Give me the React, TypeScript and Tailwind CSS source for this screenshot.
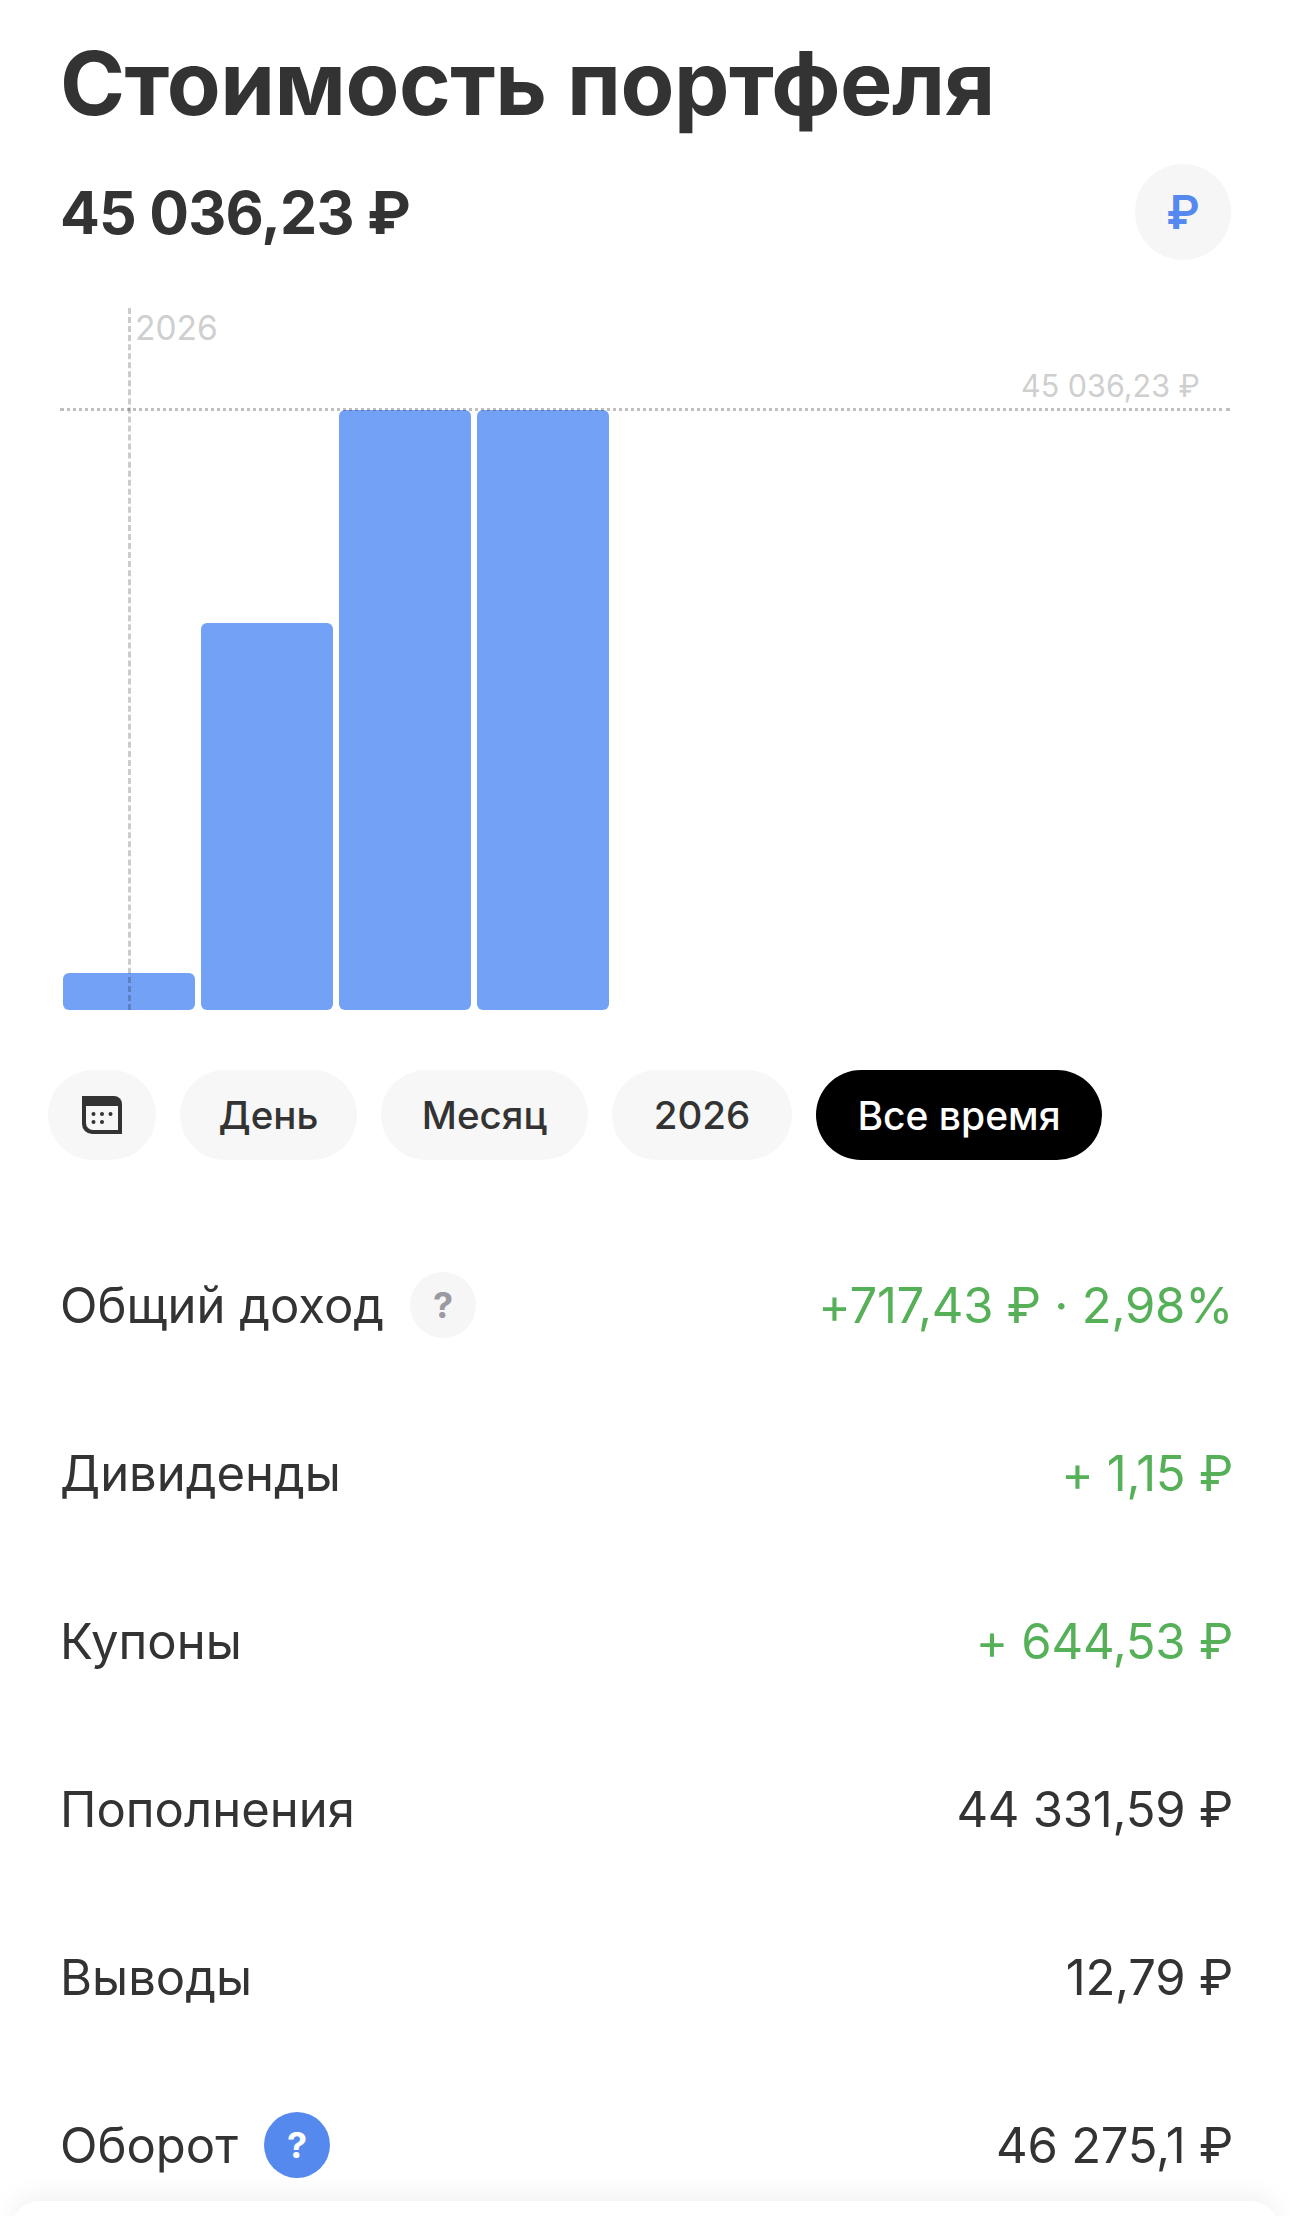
import React from 'react';

const FONT = "font-['Inter','Noto_Sans',sans-serif]";

const bars = [
  { id: 'a', height: 'h-[37px]' },
  { id: 'b', height: 'h-[387px]' },
  { id: 'c', height: 'h-[600px]' },
  { id: 'd', height: 'h-[600px]' },
];

const periods = [
  { label: 'День', width: 'w-[177px]' },
  { label: 'Месяц', width: 'w-[207px]' },
  { label: '2026', width: 'w-[180px]' },
];

const rows = [
  { label: 'Общий доход', value: '+717,43 ₽ · 2,98%', green: true, hint: 'gray' },
  { label: 'Дивиденды', value: '+ 1,15 ₽', green: true },
  { label: 'Купоны', value: '+ 644,53 ₽', green: true },
  { label: 'Пополнения', value: '44 331,59 ₽' },
  { label: 'Выводы', value: '12,79 ₽' },
  { label: 'Оборот', value: '46 275,1 ₽', hint: 'blue' },
];

const CalendarIcon = () => (
  <svg width="40" height="38" viewBox="0 0 40 38" fill="none">
    <path d="M0 0H32a8 8 0 0 1 8 8V38H10a10 10 0 0 1-10-10Z" fill="#333333" />
    <path d="M4 10H36V34H11a7 7 0 0 1-7-7Z" fill="#f7f7f7" />
    <circle cx="11.5" cy="18" r="2" fill="#333333" />
    <circle cx="20" cy="18" r="2" fill="#333333" />
    <circle cx="28.5" cy="18" r="2" fill="#333333" />
    <circle cx="11.5" cy="26" r="2" fill="#333333" />
    <circle cx="20" cy="26" r="2" fill="#333333" />
  </svg>
);

const App = () => {
  return (
    <div className={`relative h-[2216px] w-[1290px] overflow-hidden bg-white text-[#333333] ${FONT}`}>
      <div className="pt-[30px] pr-[59px] pl-[60px]">
        <h1 className="text-[88px] leading-[106px] font-bold tracking-[-0.5px]">Стоимость портфеля</h1>
        <div className="mt-[28px] flex h-[96px] items-center justify-between">
          <div className="text-[59px] leading-none font-bold tracking-[-0.8px]">45 036,23 ₽</div>
          <div className="flex h-[96px] w-[96px] items-center justify-center rounded-full bg-[#f6f6f6] text-[46px] font-semibold text-[#5589ee]">
            ₽
          </div>
        </div>
      </div>

      {/* Chart */}
      <div className="relative mx-[60px] mt-[48px] h-[702px] w-[1170px]">
        <div className="absolute inset-x-0 bottom-0 flex items-end gap-[6px] pl-[3px]">
          {bars.map((bar) => (
            <div key={bar.id} className={`w-[132px] rounded-[6px] bg-[#73a1f6] ${bar.height}`} />
          ))}
        </div>
        <div className="absolute top-0 bottom-0 left-[68px] border-l-[3px] border-dashed border-black/20" />
        <div className="absolute inset-x-0 top-[100px] border-t-[3px] border-dotted border-black/25" />
        <div className="absolute top-[0px] left-[75px] text-[33.5px] leading-[40px] text-[#cfcfcf]">2026</div>
        <div className="absolute top-[60px] right-[30px] text-[30.5px] leading-[36px] text-[#cfcfcf]">45 036,23 ₽</div>
      </div>

      {/* Period switcher */}
      <div className="mt-[60px] flex gap-[24px] pl-[48px]">
        <div className="flex h-[90px] w-[108px] items-center justify-center rounded-[45px] bg-[#f7f7f7]">
          <CalendarIcon />
        </div>
        {periods.map((period) => (
          <div
            key={period.label}
            className={`flex h-[90px] items-center justify-center rounded-[45px] bg-[#f7f7f7] pt-[2px] text-[38.5px] font-medium ${period.width}`}
          >
            {period.label}
          </div>
        ))}
        <div className="flex h-[90px] w-[286px] items-center justify-center rounded-[45px] bg-black pt-[2px] text-[39px] font-medium text-white">
          Все время
        </div>
      </div>

      {/* Stats */}
      <div className="mt-[61px] flex flex-col pr-[57px] pl-[60px]">
        {rows.map((row) => (
          <div key={row.label} className="flex h-[168px] items-center justify-between text-[49px]">
            <div className="flex items-center gap-[26px]">
              <span className="translate-y-[1px]">{row.label}</span>
              {row.hint === 'gray' && (
                <span className="flex h-[66px] w-[66px] items-center justify-center rounded-full bg-[#f6f6f6] text-[36px] font-bold text-[#9a9aa2]">
                  ?
                </span>
              )}
              {row.hint === 'blue' && (
                <span className="flex h-[66px] w-[66px] items-center justify-center rounded-full bg-[#5589ee] text-[36px] font-bold text-white">
                  ?
                </span>
              )}
            </div>
            <span className={`translate-y-[1px] tracking-[-0.25px] ${row.green ? 'text-[#55b058]' : ''}`}>{row.value}</span>
          </div>
        ))}
      </div>

      <div className="absolute inset-x-[10px] top-[2201px] h-[40px] rounded-t-[30px] bg-white shadow-[0_-8px_24px_rgba(0,0,0,0.05)]" />
    </div>
  );
};

export default App;
